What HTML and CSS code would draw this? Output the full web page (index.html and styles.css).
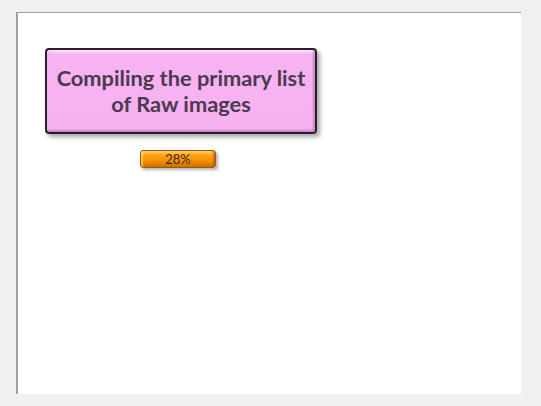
FILE: index.html
```html
<!DOCTYPE html>
<html>
<head>
<meta charset="utf-8">
<link rel="stylesheet" href="styles.css">
</head>
<body>
<div class="frame">
  <div class="title-box">Compiling the primary list<br>of Raw images</div>
  <div class="progress">28%</div>
</div>
</body>
</html>
```
FILE: styles.css
```css
html, body {
  margin: 0;
  padding: 0;
  background: #f0f0f0;
  width: 541px;
  height: 406px;
  overflow: hidden;
}
body {
  padding: 12px 0 0 16px;
  box-sizing: border-box;
}
.frame {
  width: 505px;
  height: 382px;
  box-sizing: border-box;
  background: #ffffff;
  border-top: 1px solid #a0a0a0;
  border-left: 2px solid #a0a0a0;
  padding: 35px 0 0 27px;
  display: flex;
  flex-direction: column;
  align-items: flex-start;
}
.title-box {
  width: 272px;
  height: 86px;
  box-sizing: border-box;
  border: 2px solid #2a1e2c;
  border-radius: 4px;
  background: linear-gradient(#fde6fb 0, #f6b3f1 4px, #f6b1f1 100%);
  box-shadow: 3px 3px 4px rgba(0,0,0,0.35), inset -2px -2px 2px rgba(120,60,120,0.35);
  display: flex;
  align-items: center;
  justify-content: center;
  text-align: center;
  font-family: "Lato", "Open Sans", sans-serif;
  font-weight: bold;
  font-size: 21.8px;
  line-height: 26px;
  color: #4b3a4e;
  padding-top: 0;
}
.progress {
  margin: 16px 0 0 95px;
  width: 76px;
  height: 18px;
  box-sizing: border-box;
  border: 1px solid #9a5a00;
  border-radius: 3px;
  background: linear-gradient(#ffd27a 0, #ffa31a 25%, #f79000 60%, #c76e00 100%);
  box-shadow: 2px 2px 3px rgba(0,0,0,0.3), inset 2px 0 1px rgba(255,220,150,0.6), inset -2px 0 1px rgba(150,80,0,0.5);
  font-family: "Lato", "Open Sans", sans-serif;
  font-size: 13px;
  line-height: 16px;
  text-align: center;
  color: #3a2a10;
}
```
